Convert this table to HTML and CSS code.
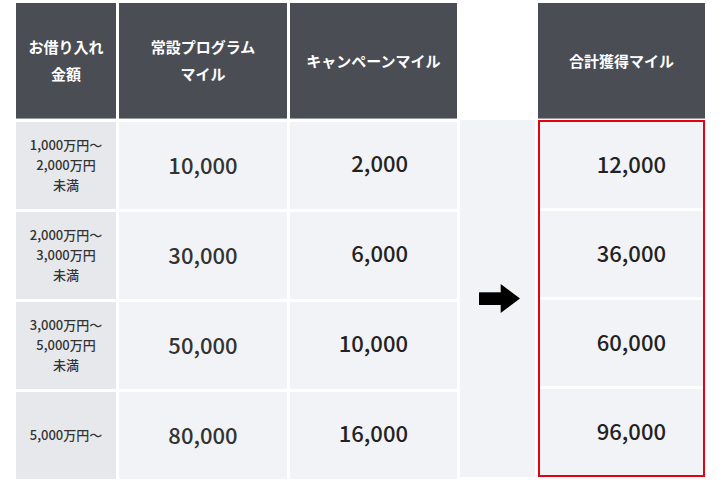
FILE: index.html
```html
<!DOCTYPE html>
<html lang="ja">
<head>
<meta charset="utf-8">
<link rel="stylesheet" href="styles.css">
</head>
<body>
<div class="table">
  <div class="th">お借り入れ<br>金額</div>
  <div class="th">常設プログラム<br>マイル</div>
  <div class="th">キャンペーンマイル</div>
  <div class="spacer"></div>
  <div class="th">合計獲得マイル</div>

  <div class="amount">1,000万円〜<br>2,000万円<br>未満</div>
  <div class="base">10,000</div>
  <div class="camp">2,000</div>

  <div class="amount">2,000万円〜<br>3,000万円<br>未満</div>
  <div class="base">30,000</div>
  <div class="camp">6,000</div>

  <div class="amount">3,000万円〜<br>5,000万円<br>未満</div>
  <div class="base">50,000</div>
  <div class="camp">10,000</div>

  <div class="amount">5,000万円〜</div>
  <div class="base">80,000</div>
  <div class="camp">16,000</div>

  <div class="arrow-col">
    <svg class="arrow" width="41" height="29" viewBox="0 0 41 29"><rect x="0" y="8.3" width="22.5" height="12.7" fill="#000"/><polygon points="21.7,0 41,14.5 21.7,29" fill="#000"/></svg>
  </div>

  <div class="totals">
    <div class="total">12,000</div>
    <div class="total">36,000</div>
    <div class="total">60,000</div>
    <div class="total">96,000</div>
  </div>
</div>
</body>
</html>
```

FILE: styles.css
```css
html, body {
  margin: 0;
  padding: 0;
  background: #ffffff;
}
body {
  font-family: "Noto Sans CJK JP", "Noto Sans", sans-serif;
  color: #333;
}
.table {
  display: grid;
  grid-template-columns: 100px 168px 167px 75px 167px;
  grid-template-rows: 116px repeat(4, 87px);
  gap: 3px;
  padding: 3px 0 0 16px;
}
.th {
  background: #4b4d55;
  border-bottom: 1px solid #9a9ca1;
  color: #fff;
  font-weight: bold;
  font-size: 15px;
  line-height: 27px;
  display: flex;
  align-items: center;
  justify-content: center;
  text-align: center;
  padding-bottom: 1px;
}
.spacer { background: #fff; }
.amount {
  background: #e6e8eb;
  font-size: 13px;
  font-weight: 500;
  line-height: 20px;
  display: flex;
  align-items: center;
  justify-content: center;
  text-align: center;
  color: #333;
  padding-bottom: 2px;
}
.base, .camp, .total {
  background: #f2f3f6;
  font-size: 22px;
  font-weight: 500;
  display: flex;
  align-items: center;
}
.base {
  justify-content: center;
  color: #333;
  padding-bottom: 4px;
}
.camp {
  justify-content: flex-end;
  padding-right: 49px;
  padding-bottom: 7px;
  color: #222;
}
.arrow-col {
  grid-column: 4;
  grid-row: 2 / 6;
  margin: -2px 0 2px;
  background: #f2f3f6;
  display: flex;
  align-items: center;
  justify-content: center;
}
.arrow { display: block; margin-left: 4px; }
.totals {
  grid-column: 5;
  grid-row: 2 / 6;
  margin: -2px 0 2px;
  border: 2px solid #e60012;
  background: #fff;
  display: grid;
  grid-template-rows: repeat(4, 1fr);
  gap: 3px;
}
.total {
  justify-content: flex-end;
  padding-right: 37px;
  padding-bottom: 5px;
  color: #222;
}
```
